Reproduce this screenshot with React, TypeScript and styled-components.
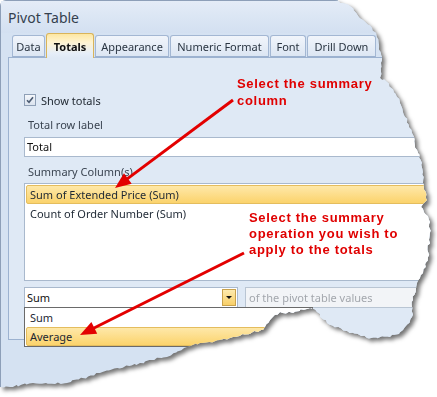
import React from 'react';
import styled, { createGlobalStyle } from 'styled-components';

const GlobalStyle = createGlobalStyle`
  html, body {
    margin: 0;
    padding: 0;
    background: #ffffff;
  }
  body {
    width: 437px;
    height: 397px;
    overflow: hidden;
    font-family: "Noto Sans", "DejaVu Sans", sans-serif;
    font-size: 11px;
    color: #222a33;
  }
`;

// torn right/bottom edge of the screenshot, jagged a little so it looks ripped
const tornEdge: [number, number][] = [
    [335, 0], [350, 6], [363, 20], [372, 28], [377, 37], [382, 60], [380, 78], [387, 82],
    [397, 97], [405, 117], [412, 133], [417, 150], [422, 163], [423, 183], [427, 200],
    [421, 207], [430, 222], [429, 240], [428, 257], [423, 273], [417, 283], [413, 300],
    [412, 317], [403, 330], [390, 337], [367, 338], [347, 331], [327, 323], [317, 312],
    [310, 308], [293, 313], [280, 312], [270, 320], [263, 330], [233, 337], [220, 340],
    [200, 343], [187, 347], [167, 357], [140, 363], [100, 373], [67, 383], [33, 383],
    [10, 387], [0, 387],
];

const buildClip = () => {
    let seed = 11;
    const rnd = () => {
        seed = (seed * 9301 + 49297) % 233280;
        return seed / 233280 - 0.5;
    };
    const pts: string[] = ['0px 0px'];
    for (let i = 0; i < tornEdge.length - 1; i++) {
        const [x1, y1] = tornEdge[i];
        const [x2, y2] = tornEdge[i + 1];
        const steps = Math.max(1, Math.round(Math.hypot(x2 - x1, y2 - y1) / 3));
        for (let k = 0; k < steps; k++) {
            const t = k / steps;
            const j = k === 0 ? 0 : 2.4;
            pts.push(`${(x1 + (x2 - x1) * t + rnd() * j).toFixed(1)}px ${(y1 + (y2 - y1) * t + rnd() * j).toFixed(1)}px`);
        }
    }
    pts.push('0px 387px');
    return pts.join(', ');
};

const clip = buildClip();

const Page = styled.div`
    width: 437px;
    height: 397px;
    filter: drop-shadow(3px 3px 2px rgba(0, 0, 0, 0.55));
`;

const Window = styled.div`
    position: relative;
    box-sizing: border-box;
    width: 437px;
    height: 397px;
    background: #d5e2f2;
    border-left: 1px solid #8d9fb8;
    border-top: 1px solid #8d9fb8;
    border-top-left-radius: 6px;
    clip-path: polygon(${clip});
    display: flex;
    flex-direction: column;
`;

const TitleBar = styled.div`
    height: 32px;
    display: flex;
    align-items: center;
    padding-left: 7px;
    font-size: 14px;
    color: #34404e;
    background: linear-gradient(#e4ecf7, #d3e0f1);
`;

const Body = styled.div`
    padding-left: 7px;
    display: flex;
    flex-direction: column;
`;

const TabStrip = styled.div`
    height: 24px;
    display: flex;
    align-items: flex-end;
    gap: 1px;
    padding-left: 4px;
`;

const Tab = styled.div<{ $width: number; $active?: boolean }>`
    position: relative;
    z-index: ${(p) => (p.$active ? 2 : 1)};
    box-sizing: border-box;
    width: ${(p) => p.$width}px;
    height: ${(p) => (p.$active ? 25 : 22)}px;
    margin-bottom: ${(p) => (p.$active ? -1 : 0)}px;
    display: flex;
    align-items: center;
    justify-content: center;
    padding-top: ${(p) => (p.$active ? 0 : 1)}px;
    font-weight: ${(p) => (p.$active ? 700 : 400)};
    color: ${(p) => (p.$active ? '#111' : '#2a3542')};
    border: 1px solid ${(p) => (p.$active ? '#d9b45a' : '#a3b7d3')};
    border-bottom: ${(p) => (p.$active ? 'none' : '1px solid #9cb2d0')};
    border-radius: 3px 3px 0 0;
    background: ${(p) =>
        p.$active
            ? 'linear-gradient(#fde7a2 0%, #fff4d2 35%, #e6eef8 80%, #dfe9f5 100%)'
            : 'linear-gradient(#f1f5fb, #dce6f3)'};
`;

const Panel = styled.div`
    position: relative;
    box-sizing: border-box;
    width: 440px;
    height: 283px;
    padding-left: 15px;
    border: 1px solid #9cb2d0;
    background: #dfe9f5;
    display: flex;
    flex-direction: column;
`;

const CheckRow = styled.div`
    margin-top: 34px;
    height: 16px;
    display: flex;
    align-items: center;
    gap: 5px;
`;

const CheckBox = styled.div`
    box-sizing: border-box;
    width: 12px;
    height: 12px;
    border: 1px solid #8e9fb6;
    background: linear-gradient(#f4f7fb, #dbe3ee);
    display: flex;
    align-items: center;
    justify-content: center;
`;

const FieldLabel = styled.div<{ $gap: number }>`
    margin-top: ${(p) => p.$gap}px;
    padding-left: 4px;
    height: 16px;
    line-height: 16px;
    color: #3a4451;
`;

const TextBox = styled.div`
    box-sizing: border-box;
    margin-top: 4px;
    width: 412px;
    height: 20px;
    line-height: 18px;
    padding-left: 2px;
    border: 1px solid #a9b9cd;
    background: #fff;
    color: #111;
`;

const ListBox = styled.div`
    box-sizing: border-box;
    margin-top: 3px;
    width: 412px;
    height: 98px;
    padding: 1px;
    border: 1px solid #a9b9cd;
    background: #fff;
`;

const ListItem = styled.div<{ $selected?: boolean }>`
    box-sizing: border-box;
    height: 19px;
    line-height: 17px;
    padding-left: 3px;
    color: #1d2733;
    border: 1px solid ${(p) => (p.$selected ? '#e4bd5e' : 'transparent')};
    border-radius: 2px;
    background: ${(p) => (p.$selected ? 'linear-gradient(#fee8a9, #fbd36c)' : 'transparent')};
`;

const ComboRow = styled.div`
    margin-top: 6px;
    height: 21px;
    display: flex;
    gap: 7px;
`;

const Combo = styled.div`
    position: relative;
    box-sizing: border-box;
    width: 214px;
    height: 21px;
    border: 1px solid #a9b9cd;
    background: #fff;
    display: flex;
`;

const ComboText = styled.div`
    flex: 1;
    padding-left: 2px;
    line-height: 19px;
    color: #111;
`;

const DropButton = styled.div`
    box-sizing: border-box;
    width: 14px;
    height: 17px;
    margin: 1px 1px 1px 0;
    border: 1px solid #c9a24c;
    background: linear-gradient(#fdeaae, #f8cf68);
    display: flex;
    align-items: center;
    justify-content: center;

    &::after {
        content: '';
        border-left: 3px solid transparent;
        border-right: 3px solid transparent;
        border-top: 3px solid #111;
    }
`;

const DisabledBox = styled.div`
    box-sizing: border-box;
    width: 175px;
    height: 21px;
    padding-left: 3px;
    line-height: 19px;
    border: 1px solid #b9c5d3;
    background: #f2f4f7;
    color: #a3a7ad;
`;

const DropList = styled.div`
    position: absolute;
    top: 100%;
    left: -1px;
    z-index: 3;
    box-sizing: border-box;
    width: 289px;
    border: 1px solid #6a6a6a;
    background: #fff;
`;

const DropItem = styled(ListItem)`
    margin: 0 1px;
`;

const Callout = styled.div<{ $left: number; $top: number; $lineHeight: number }>`
    position: absolute;
    left: ${(p) => p.$left}px;
    top: ${(p) => p.$top}px;
    z-index: 5;
    font-family: "Liberation Sans", Arial, sans-serif;
    font-weight: 700;
    font-size: 13px;
    letter-spacing: 0.7px;
    line-height: ${(p) => p.$lineHeight}px;
    color: #e00000;
    white-space: pre;
`;

const ArrowLayer = styled.svg`
    position: absolute;
    left: -1px;
    top: -1px;
    z-index: 6;
    width: 437px;
    height: 397px;
    pointer-events: none;
`;

interface ArrowProps {
    x1: number;
    y1: number;
    x2: number;
    y2: number;
}

const Arrow = ({ x1, y1, x2, y2 }: ArrowProps) => {
    const len = Math.hypot(x2 - x1, y2 - y1);
    const ux = (x2 - x1) / len;
    const uy = (y2 - y1) / len;
    const bx = x2 - ux * 16;
    const by = y2 - uy * 16;
    const w = 6.5;
    const head = `${x2},${y2} ${bx - uy * w},${by + ux * w} ${bx + uy * w},${by - ux * w}`;
    return (
        <g>
            <line x1={x1} y1={y1} x2={bx + ux * 2} y2={by + uy * 2} stroke='#e30000' strokeWidth={3} />
            <polygon points={head} fill='#e30000' />
        </g>
    );
};

const tabs = [
    { label: 'Data', width: 33 },
    { label: 'Totals', width: 48, active: true },
    { label: 'Appearance', width: 74 },
    { label: 'Numeric Format', width: 99 },
    { label: 'Font', width: 36 },
    { label: 'Drill Down', width: 69 },
];

export default function App() {
    return (
        <>
            <GlobalStyle />
            <Page>
                <Window>
                    <TitleBar>Pivot Table</TitleBar>
                    <Body>
                        <TabStrip>
                            {tabs.map((t) => (
                                <Tab key={t.label} $width={t.width} $active={t.active}>
                                    {t.label}
                                </Tab>
                            ))}
                        </TabStrip>
                        <Panel>
                            <CheckRow>
                                <CheckBox>
                                    <svg width='8' height='8' viewBox='0 0 8 8'>
                                        <path d='M1 4.2 L3 6.3 L7 1.2' fill='none' stroke='#4b5b72' strokeWidth='1.6' />
                                    </svg>
                                </CheckBox>
                                <span>Show totals</span>
                            </CheckRow>
                            <FieldLabel $gap={9}>Total row label</FieldLabel>
                            <TextBox>Total</TextBox>
                            <FieldLabel $gap={7}>Summary Column(s)</FieldLabel>
                            <ListBox>
                                <ListItem $selected>Sum of Extended Price (Sum)</ListItem>
                                <ListItem>Count of Order Number (Sum)</ListItem>
                            </ListBox>
                            <ComboRow>
                                <Combo>
                                    <ComboText>Sum</ComboText>
                                    <DropButton />
                                    <DropList>
                                        <DropItem>Sum</DropItem>
                                        <DropItem $selected>Average</DropItem>
                                    </DropList>
                                </Combo>
                                <DisabledBox>of the pivot table values</DisabledBox>
                            </ComboRow>
                        </Panel>
                    </Body>
                    <Callout $left={236} $top={74} $lineHeight={17}>
                        {'Select the summary\ncolumn'}
                    </Callout>
                    <Callout $left={248} $top={209} $lineHeight={16}>
                        {'Select the summary\noperation you wish to\napply to the totals'}
                    </Callout>
                    <ArrowLayer viewBox='0 0 437 397'>
                        <Arrow x1={233} y1={100} x2={115} y2={188} />
                        <Arrow x1={244} y1={253} x2={80} y2={335} />
                    </ArrowLayer>
                </Window>
            </Page>
        </>
    );
}
